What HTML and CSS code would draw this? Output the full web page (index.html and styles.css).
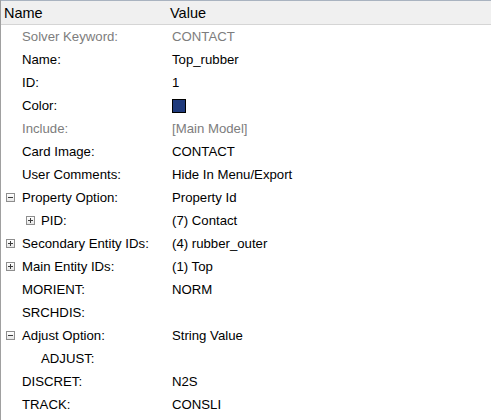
FILE: index.html
```html
<!DOCTYPE html>
<html>
<head>
<meta charset="utf-8">
<link rel="stylesheet" href="styles.css">
</head>
<body>
<div class="grid">
  <div class="head">
    <div class="hcell hname">Name</div>
    <div class="hcell hvalue">Value</div>
  </div>
  <div class="rows">
    <div class="row muted"><div class="n l0">Solver Keyword:</div><div class="v">CONTACT</div></div>
    <div class="row"><div class="n l0">Name:</div><div class="v">Top_rubber</div></div>
    <div class="row"><div class="n l0">ID:</div><div class="v">1</div></div>
    <div class="row"><div class="n l0">Color:</div><div class="v"><span class="swatch"></span></div></div>
    <div class="row muted"><div class="n l0">Include:</div><div class="v">[Main Model]</div></div>
    <div class="row"><div class="n l0">Card Image:</div><div class="v">CONTACT</div></div>
    <div class="row"><div class="n l0">User Comments:</div><div class="v">Hide In Menu/Export</div></div>
    <div class="row"><div class="n e0"><span class="exp minus"></span>Property Option:</div><div class="v">Property Id</div></div>
    <div class="row"><div class="n e1"><span class="exp plus"></span>PID:</div><div class="v">(7) Contact</div></div>
    <div class="row"><div class="n e0"><span class="exp plus"></span>Secondary Entity IDs:</div><div class="v">(4) rubber_outer</div></div>
    <div class="row"><div class="n e0"><span class="exp plus"></span>Main Entity IDs:</div><div class="v">(1) Top</div></div>
    <div class="row"><div class="n l0">MORIENT:</div><div class="v">NORM</div></div>
    <div class="row"><div class="n l0">SRCHDIS:</div><div class="v"></div></div>
    <div class="row"><div class="n e0"><span class="exp minus"></span>Adjust Option:</div><div class="v">String Value</div></div>
    <div class="row"><div class="n l1">ADJUST:</div><div class="v"></div></div>
    <div class="row"><div class="n l0">DISCRET:</div><div class="v">N2S</div></div>
    <div class="row"><div class="n l0">TRACK:</div><div class="v">CONSLI</div></div>
  </div>
</div>
</body>
</html>
```
FILE: styles.css
```css
html, body {
  margin: 0;
  padding: 0;
  background: #ffffff;
}
body {
  font-family: "Liberation Sans", Arial, sans-serif;
  color: #000000;
  width: 491px;
  height: 420px;
  overflow: hidden;
}
.grid {
  height: 420px;
  border-left: 1px solid #a0a0a0;
  box-sizing: border-box;
}
.head {
  display: grid;
  grid-template-columns: 167px 1fr;
  height: 25px;
  background: #f0f0f0;
  border-top: 1px solid #a9b3c0;
  border-bottom: 1px solid #d5d5d5;
  box-sizing: border-box;
  align-items: center;
  font-size: 14.5px;
}
.hname { padding-left: 3px; }
.hvalue { padding-left: 2px; }
.hcell { line-height: 22px; }
.rows { display: flex; flex-direction: column; }
.row {
  display: grid;
  grid-template-columns: 167px 1fr;
  height: 23px;
  align-items: center;
  font-size: 13.2px;
}
.row.muted { color: #7d7d7d; }
.n { display: flex; align-items: center; white-space: nowrap; }
.l0 { padding-left: 21px; }
.l1 { padding-left: 40px; }
.e0 { padding-left: 5px; }
.e1 { padding-left: 25px; }
.e0 .exp { margin-right: 7px; }
.e1 .exp { margin-right: 6px; }
.v { padding-left: 4px; white-space: nowrap; }
.exp {
  position: relative;
  width: 9px;
  height: 9px;
  box-sizing: border-box;
  border: 1px solid #8e8e8e;
  background: linear-gradient(#ffffff, #e6e6e6);
  flex: none;
}
.exp::before {
  content: "";
  position: absolute;
  left: 1px;
  top: 3px;
  width: 5px;
  height: 1px;
  background: #3c3c3c;
}
.exp.plus::after {
  content: "";
  position: absolute;
  left: 3px;
  top: 1px;
  width: 1px;
  height: 5px;
  background: #3c3c3c;
}
.swatch {
  display: inline-block;
  width: 14px;
  height: 14px;
  box-sizing: border-box;
  border: 1px solid #000000;
  background: #1f3a7c;
  vertical-align: middle;
}
```
